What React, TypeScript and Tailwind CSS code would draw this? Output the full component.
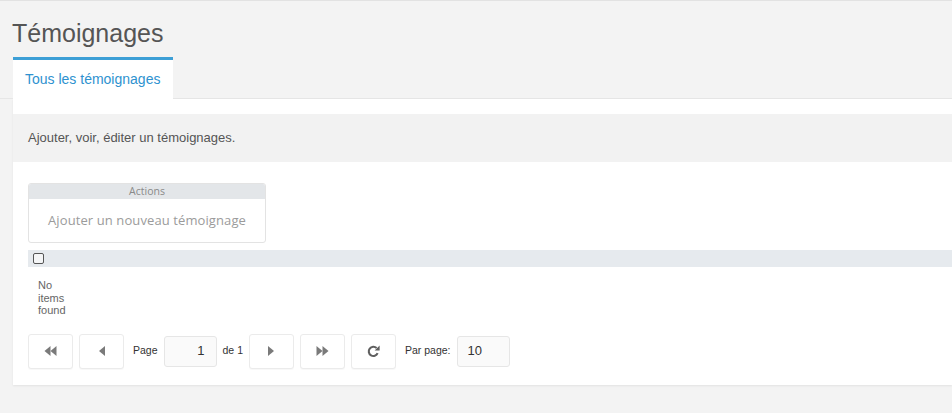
import React from "react";

const FONT = "font-['Liberation_Sans',Arial,sans-serif]";

function IconFirst() {
  return (
    <svg width="13" height="10" viewBox="0 0 13 10" fill="#7a7a7a">
      <polygon points="6.5,0 6.5,10 0.5,5" />
      <polygon points="12.5,0 12.5,10 6.5,5" />
    </svg>
  );
}

function IconPrev() {
  return (
    <svg width="6" height="10" viewBox="0 0 6 10" fill="#7a7a7a">
      <polygon points="6,0 6,10 0,5" />
    </svg>
  );
}

function IconNext() {
  return (
    <svg width="6" height="10" viewBox="0 0 6 10" fill="#7a7a7a">
      <polygon points="0,0 0,10 6,5" />
    </svg>
  );
}

function IconLast() {
  return (
    <svg width="13" height="10" viewBox="0 0 13 10" fill="#7a7a7a">
      <polygon points="0.5,0 0.5,10 6.5,5" />
      <polygon points="6.5,0 6.5,10 12.5,5" />
    </svg>
  );
}

function IconRefresh() {
  return (
    <svg width="13" height="13" viewBox="0 0 13 13" fill="none">
      <path
        d="M10.6 8.2 A4.6 4.6 0 1 1 9.6 3.1"
        stroke="#5f5f5f"
        strokeWidth="2.1"
      />
      <polygon points="12.6,0.6 12.6,5.6 7.6,5.6" fill="#5f5f5f" />
    </svg>
  );
}

function PagerButton({ children }: { children: React.ReactNode }) {
  return (
    <button className="w-[45px] h-[35px] flex items-center justify-center bg-white border border-[#ebebeb] rounded-[3px] shadow-[0_1px_1px_rgba(0,0,0,0.03)]">
      {children}
    </button>
  );
}

export default function App() {
  return (
    <div
      className={`${FONT} w-full h-[413px] bg-[#f3f3f3] border-t border-[#e2e2e2] overflow-hidden`}
    >
      <div className="pt-[17px] pl-[12px] text-[25px] leading-[30px] text-[#555]">
        Témoignages
      </div>

      <div className="mt-[9px] pl-[13px] flex border-b border-[#e6e6e6]">
        <div className="w-[160px] bg-white border-t-[3px] border-[#3d9fd6] px-[12px] pt-[9px] pb-[10px] text-[14px] leading-[20px] text-[#2e92cf] mb-[-1px]">
          Tous les témoignages
        </div>
      </div>

      <div className="ml-[13px] bg-white pt-[15px] pb-[16px] shadow-[0_1px_2px_rgba(0,0,0,0.07)]">
        <div className="h-[48px] flex items-center px-[15px] bg-[#f2f2f2] text-[13px] text-[#555]">
          Ajouter, voir, éditer un témoignages.
        </div>

        <div className="pl-[15px]">
          <div className="mt-[21px] w-[238px] border border-[#e3e3e3] rounded-[3px] overflow-hidden font-['Open_Sans',sans-serif]">
            <div className="h-[15px] bg-[#e3e6e9] text-center text-[10.5px] leading-[15px] text-[#8a8a8a]">
              Actions
            </div>
            <div className="h-[43px] flex items-center justify-center text-[13px] text-[#9b9b9b] tracking-[0.1px]">
              Ajouter un nouveau témoignage
            </div>
          </div>

          <div className="mt-[7px] h-[17px] bg-[#e6eaee] flex items-center pl-[5px]">
            <span className="w-[11px] h-[11px] border-[1.5px] border-[#555] rounded-[2px] bg-[#f4f5f6]" />
          </div>

          <div className="pt-[12px] pl-[10px] w-[1px] text-[11px] leading-[12.5px] text-[#666]">
            No items found
          </div>

          <div className="mt-[17px] flex items-center text-[10.5px] text-[#333]">
            <PagerButton>
              <IconFirst />
            </PagerButton>
            <div className="ml-[6px]">
              <PagerButton>
                <IconPrev />
              </PagerButton>
            </div>
            <span className="ml-[9px]">Page</span>
            <div className="ml-[6px] w-[53px] h-[31px] bg-[#fafafa] border border-[#e6e6e6] rounded-[3px] flex items-center justify-end pr-[11px] text-[13px] text-[#333]">
              1
            </div>
            <span className="ml-[6px]">de 1</span>
            <div className="ml-[6px]">
              <PagerButton>
                <IconNext />
              </PagerButton>
            </div>
            <div className="ml-[6px]">
              <PagerButton>
                <IconLast />
              </PagerButton>
            </div>
            <div className="ml-[6px]">
              <PagerButton>
                <IconRefresh />
              </PagerButton>
            </div>
            <span className="ml-[9px]">Par page:</span>
            <div className="ml-[6px] w-[53px] h-[31px] bg-[#fafafa] border border-[#e6e6e6] rounded-[3px] flex items-center pl-[10px] text-[13px] text-[#333]">
              10
            </div>
          </div>
        </div>
      </div>
    </div>
  );
}
